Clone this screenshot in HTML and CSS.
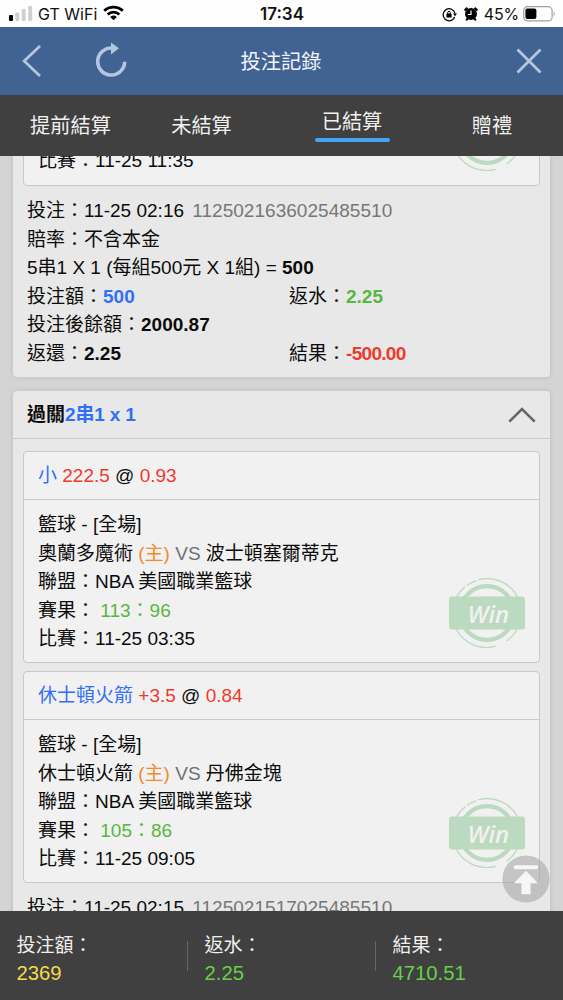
FILE: index.html
```html
<!DOCTYPE html>
<html lang="zh-Hant">
<head>
<meta charset="utf-8">
<title>投注記錄</title>
<link rel="stylesheet" href="styles.css">
</head>
<body>
<svg class="defs" width="0" height="0" aria-hidden="true">
  <symbol id="win" viewBox="0 0 76 70">
    <g fill="none" stroke="#bbdabf">
      <circle cx="38" cy="35" r="26.8" stroke-width="4.2"/>
      <g stroke-width="1.3" stroke-linecap="round">
        <path d="M29.7 1.7A34.2 34.2 0 0 1 58 62.7"/>
        <path d="M46.3 68.4A34.2 34.2 0 0 1 15.8 9"/>
        <path d="M18.5 7A34.2 34.2 0 0 1 27 2.8"/>
      </g>
    </g>
    <rect y="18.5" width="76" height="33" rx="3" fill="#bbdabf"/>
  </symbol>
</svg>
<div class="phone">
  <header class="status">
    <div class="status-side">
      <svg class="signal" width="24" height="16" viewBox="0 0 24 16"><rect x="0" y="10" width="4" height="6" rx="1"/><g fill="#d0d0d0"><rect x="6.3" y="7.5" width="4" height="8.5" rx="1"/><rect x="12.7" y="4" width="4" height="12" rx="1"/><rect x="19.2" y="1" width="4" height="15" rx="1"/></g></svg>
      <span class="carrier">GT WiFi</span>
      <svg class="wifi" width="21" height="16" viewBox="0 0 21 16"><g fill="none" stroke="#000" stroke-width="2.7"><path d="M1.2 5.8A13.5 13.5 0 0 1 19.8 5.8"/><path d="M4.6 9.4A8.6 8.6 0 0 1 16.4 9.4"/></g><path d="M7.2 12A5 5 0 0 1 13.8 12L10.5 15.3Z"/></svg>
    </div>
    <b class="clock">17:34</b>
    <div class="status-side right">
      <svg width="15" height="15" viewBox="0 0 15 15"><path d="M12.7 10A6 6 0 1 1 13 6.5" fill="none" stroke="#000" stroke-width="1.3"/><path d="M11 6.4H15L13 9.3Z"/><rect x="4.4" y="6.5" width="5.2" height="4" rx=".6"/><path d="M5.7 7V5.6a1.3 1.3 0 0 1 2.6 0V7" fill="none" stroke="#000" stroke-width="1"/></svg>
      <svg class="alarm" width="14" height="14" viewBox="0 0 14 14"><circle cx="7" cy="7" r="6"/><path d="M.6 3.4 3.5.8M13.4 3.4 10.5.8M2.2 13.3l1.6-2M11.8 13.3l-1.6-2" stroke="#000" stroke-width="2"/><path d="M7 3.5V7.5H3.8" fill="none" stroke="#fff" stroke-width="1.2"/></svg>
      <span class="percent">45%</span>
      <svg class="battery" width="33" height="16" viewBox="0 0 33 16"><rect x=".7" y=".7" width="28.4" height="14.2" rx="4" fill="none" stroke="#a0a0a0" stroke-width="1.2"/><rect x="2.4" y="2.6" width="11" height="10.4" rx="2"/><path d="M30.7 5.2q2 2.6 0 5.2z" fill="#a0a0a0"/></svg>
    </div>
  </header>

  <nav class="topbar">
    <div class="topbar-left">
      <svg width="20" height="34" viewBox="0 0 20 34"><path d="M18 2 2.2 17 18 32" fill="none" stroke="#b3c6dd" stroke-width="2.8"/></svg>
      <svg class="reload" width="32" height="36" viewBox="0 0 32 36"><path d="M17.2 6.2A13.5 13.5 0 1 0 28.7 19.8" fill="none" stroke="#b3c6dd" stroke-width="3.6"/><path d="M15 .5V12.5L23 6.3Z" fill="#b3c6dd"/></svg>
    </div>
    <h1>投注記錄</h1>
    <svg class="close" width="26" height="26" viewBox="0 0 26 26"><path d="M1.5 1.5 24.5 24.5M24.5 1.5 1.5 24.5" stroke="#b3c6dd" stroke-width="2.8"/></svg>
  </nav>

  <div class="tabs">
    <span>提前結算</span><span>未結算</span><span><em>已結算</em></span><span>贈禮</span>
  </div>

  <main class="list">
    <section class="card first">
      <div class="card-body">
        <article class="leg tail">
          <div class="leg-body"><p>比賽：11-25 11:35</p></div>
          <svg class="stamp" width="76" height="70"><use href="#win"/></svg>
        </article>
        <div class="summary">
          <p class="wide">投注：11-25 02:16 <span class="id">1125021636025485510</span></p>
          <p class="wide">賠率：不含本金</p>
          <p class="wide">5串1 X 1 (每組500元 X 1組) = <b>500</b></p>
          <p>投注額：<b class="blue">500</b></p><p>返水：<b class="green">2.25</b></p>
          <p class="wide">投注後餘額：<b>2000.87</b></p>
          <p>返還：<b>2.25</b></p><p>結果：<b class="red loss">-500.00</b></p>
        </div>
      </div>
    </section>

    <section class="card">
      <div class="card-head">
        <b>過關<span class="blue combo">2串1 x 1</span></b>
        <svg width="28" height="18" viewBox="0 0 28 18"><path d="M1.3 15.7 14 3 26.7 15.7" fill="none" stroke="#666" stroke-width="2.6"/></svg>
      </div>
      <div class="card-body">
        <article class="leg">
          <div class="leg-head"><span class="blue">小</span> <span class="red">222.5</span> @ <span class="red">0.93</span></div>
          <div class="leg-body">
            <p>籃球 - [全場]</p>
            <p>奧蘭多魔術 <span class="orange">(主)</span> <span class="vs">VS</span> 波士頓塞爾蒂克</p>
            <p>聯盟：NBA 美國職業籃球</p>
            <p>賽果： <span class="green">113：96</span></p>
            <p>比賽：11-25 03:35</p>
          </div>
          <div class="stamp"><svg width="76" height="70"><use href="#win"/></svg><span class="stamp-text">Win</span></div>
        </article>
        <article class="leg">
          <div class="leg-head"><span class="blue">休士頓火箭</span> <span class="red">+3.5</span> @ <span class="red">0.84</span></div>
          <div class="leg-body">
            <p>籃球 - [全場]</p>
            <p>休士頓火箭 <span class="orange">(主)</span> <span class="vs">VS</span> 丹佛金塊</p>
            <p>聯盟：NBA 美國職業籃球</p>
            <p>賽果： <span class="green">105：86</span></p>
            <p>比賽：11-25 09:05</p>
          </div>
          <div class="stamp"><svg width="76" height="70"><use href="#win"/></svg><span class="stamp-text">Win</span></div>
        </article>
        <div class="summary">
          <p class="wide">投注：11-25 02:15 <span class="id">1125021517025485510</span></p>
        </div>
      </div>
    </section>
    <svg class="to-top" width="48" height="48" viewBox="0 0 48 48"><circle cx="24" cy="24" r="23.6" fill="#9a9a9a" fill-opacity=".5"/><rect x="11.8" y="10.2" width="24.4" height="4" rx="2" fill="#f6f6f6"/><path d="M24 15.8 36 28.3H28.6V39.3H19.4V28.3H12Z" fill="#f6f6f6"/></svg>
  </main>

  <footer class="totals">
    <div><span>投注額：</span><span class="amount yellow">2369</span></div>
    <div><span>返水：</span><span class="amount lime">2.25</span></div>
    <div><span>結果：</span><span class="amount lime">4710.51</span></div>
  </footer>
</div>
</body>
</html>
```
FILE: styles.css
```css
* { box-sizing: border-box; }
body {
  margin: 0;
  font: 19px/28.5px "Liberation Sans", "Noto Sans CJK TC", sans-serif;
  color: #0c0c0c;
}
p, h1 { margin: 0; }
svg { display: block; flex: none; }
.defs { position: absolute; }
.phone {
  width: 563px;
  height: 1000px;
  display: flex;
  flex-direction: column;
  overflow: hidden;
}

.status {
  height: 27px;
  flex: none;
  display: grid;
  grid-template-columns: 1fr auto 1fr;
  padding: 1px 8px 0 9px;
  background: #fefefe;
  font-family: Inter, sans-serif;
  font-size: 16px;
  line-height: 26px;
  color: #111;
}
.status-side { display: flex; align-items: center; }
.right { justify-content: flex-end; }
.signal { margin-top: -2px; }
.carrier { margin-left: 5px; }
.wifi { margin-left: 6px; margin-top: -2px; }
.clock { font-weight: 600; font-size: 17px; }
.alarm { margin-left: 7px; }
.percent { margin-left: 6px; letter-spacing: -.2px; }
.battery { margin-left: 4px; margin-top: -1px; margin-right: -1px; }

.topbar {
  height: 68px;
  flex: none;
  display: grid;
  grid-template-columns: 1fr auto 1fr;
  align-items: center;
  padding: 0 21px 0 22px;
  background: #416394;
  color: #f2f5f9;
}
.topbar-left { display: flex; align-items: center; }
.reload { margin-left: 54px; margin-top: -3px; }
.topbar h1 { margin: 2px 2px 0 0; font-size: 20.3px; font-weight: 400; }
.close { justify-self: end; }

.tabs {
  height: 61px;
  flex: none;
  display: grid;
  grid-template-columns: 141px 121px 180px 100px;
  align-items: center;
  padding-top: 2px;
  text-align: center;
  background: #404040;
  color: #f0f0f0;
  font-size: 20.2px;
}
.tabs em {
  display: inline-block;
  width: 75px;
  padding-bottom: 3px;
  font-style: normal;
}
.tabs em::after {
  content: "";
  display: block;
  height: 4px;
  margin-top: 2px;
  border-radius: 2px;
  background: #45a5f5;
}

.list {
  flex: 1;
  min-height: 0;
  overflow: hidden;
  position: relative;
  padding: 0 13.5px 0 13px;
  background: #d4d4d4;
}
.card {
  margin-bottom: 14px;
  border-radius: 4px;
  background: #e8e8e8;
  box-shadow: 0 0 4px rgba(0, 0, 0, .13);
}
.card.first { margin-top: -70px; }
.first .card-body { padding-bottom: 9px; }
.card-head {
  height: 48px;
  display: flex;
  align-items: center;
  justify-content: space-between;
  padding: 0 14px;
  border-bottom: 1px solid #cbcbcb;
}
.card-head b { padding-top: 1px; }
.card-body { padding: 12px 10px 10px; }
.leg {
  position: relative;
  height: 212px;
  margin-bottom: 8px;
  border: 1px solid #c9c9c9;
  border-radius: 4px;
  background: #f1f1f1;
}
.leg.tail {
  height: 88px;
  display: flex;
  flex-direction: column;
  justify-content: flex-end;
}
.leg-head {
  height: 48px;
  padding: 9.5px 14px 0;
  border-bottom: 1px solid #cbcbcb;
}
.leg-body { padding: 11px 14px 10px; }
.stamp { position: absolute; right: 13.5px; bottom: 14px; }
.stamp-text {
  position: absolute;
  left: 18.5px;
  top: 19px;
  font: italic 600 24px/33px "Open Sans", "Noto Sans", sans-serif;
  color: #f1f1f1;
}
.summary {
  display: grid;
  grid-template-columns: 262px 1fr;
  margin-top: 11px;
  padding-left: 4px;
  white-space: nowrap;
}
.wide { grid-column: 1 / -1; }

.id { margin-left: 3px; color: #777; letter-spacing: .03px; }
.loss { letter-spacing: -.7px; }
.combo { letter-spacing: -.15px; }
.vs { color: #707070; }
.blue { color: #3170f6; }
.green { color: #59b640; }
.red { color: #ee3a2c; }
.orange { color: #ef8b2c; }
.yellow { color: #f2d94e; }
.lime { color: #66d04a; }

.to-top { position: absolute; right: 13.5px; bottom: 8.5px; }

.totals {
  height: 89px;
  flex: none;
  display: grid;
  grid-template-columns: 188px 188px 1fr;
  padding-top: 21px;
  background: #404040;
  color: #f0f0f0;
}
.totals div {
  display: flex;
  flex-direction: column;
  padding-left: 16.5px;
  background: linear-gradient(#666, #666) right 9px / 1px 30px no-repeat;
}
.totals div:last-child { background: none; }
.amount { margin-top: -2px; font-size: 20.3px; }
```
